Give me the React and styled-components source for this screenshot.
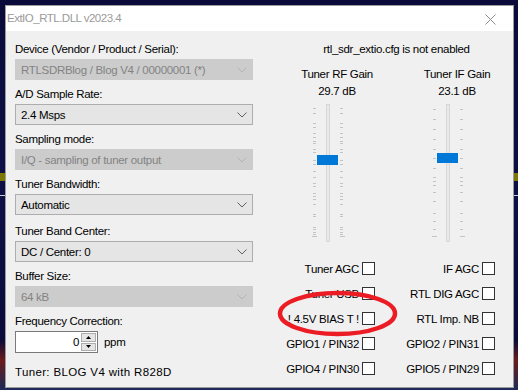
import React from "react";
import styled, { createGlobalStyle } from "styled-components";

const GlobalStyle = createGlobalStyle`
  html, body {
    margin: 0;
    padding: 0;
  }
  body {
    width: 518px;
    height: 390px;
    overflow: hidden;
    background: #0b0c3c;
    font-family: "Liberation Sans", Arial, sans-serif;
    font-size: 11.5px;
    letter-spacing: -0.3px;
    color: #000;
  }
`;

// the spectrum display behind the dialog
const Desktop = styled.div`
  position: relative;
  width: 518px;
  height: 390px;
  box-sizing: border-box;
  padding: 5px 4px 2px 5px;
  background:
    linear-gradient(to bottom, transparent 173px, #7d7600 173px, #7d7600 181px, transparent 181px, transparent 195px, #cfcfcf 195px, #cfcfcf 196px, transparent 196px),
    linear-gradient(to bottom, #0a0b3a 0, #0d0f48 200px, #0a0b3a 340px, #6b1a1a 360px, #1d2a5a 390px);
`;

const Dialog = styled.div`
  width: 509px;
  height: 383px;
  box-sizing: border-box;
  border: 1px solid #9c9c9c;
  background: #f0f0f0;
  display: flex;
  flex-direction: column;
`;

const TitleBar = styled.div`
  height: 25px;
  flex: none;
  background: #fff;
  display: flex;
  align-items: center;
  justify-content: space-between;
  padding-left: 1px;
`;

const Title = styled.span`
  color: #9a9a9a;
  font-size: 11.5px;
  letter-spacing: -0.5px;
  padding-bottom: 2px;
`;

const CloseButton = styled.div`
  width: 46px;
  height: 25px;
  display: flex;
  align-items: center;
  justify-content: center;
  padding-top: 1px;
  box-sizing: border-box;
`;

const Body = styled.div`
  flex: 1;
  display: flex;
  padding: 11px 0 0 9px;
  gap: 27px;
`;

const LeftColumn = styled.div`
  width: 238px;
  display: flex;
  flex-direction: column;
`;

const Field = styled.div`
  display: flex;
  flex-direction: column;
  margin-bottom: ${(p) => p.gap ?? 7}px;
`;

const Label = styled.div`
  height: 15px;
  line-height: 15px;
  margin-bottom: 2px;
  white-space: nowrap;
`;

const Combo = styled.div`
  height: 21px;
  box-sizing: border-box;
  display: flex;
  align-items: center;
  justify-content: space-between;
  padding: 0 5px 0 5px;
  background: ${(p) => (p.disabled ? "#cccccc" : "#e5e5e5")};
  border: 1px solid ${(p) => (p.disabled ? "#cccccc" : "#adadad")};
  color: ${(p) => (p.disabled ? "#838383" : "#000")};
  white-space: nowrap;
`;

const SpinRow = styled.div`
  display: flex;
  align-items: center;
`;

const Edit = styled.div`
  width: 66px;
  height: 22px;
  box-sizing: border-box;
  border: 1px solid #7a7a7a;
  border-right: none;
  background: #fff;
  display: flex;
  align-items: center;
  justify-content: flex-end;
  padding-right: 2px;
`;

const SpinButtons = styled.div`
  width: 17px;
  height: 22px;
  box-sizing: border-box;
  border: 1px solid #7a7a7a;
  border-left: none;
  background: #fff;
  display: flex;
  flex-direction: column;
  padding: 1px 1px 1px 0;
  gap: 1px;
`;

const SpinButton = styled.div`
  flex: 1;
  border: 1px solid #adadad;
  background: #e5e5e5;
  display: flex;
  align-items: center;
  justify-content: center;
`;

const Unit = styled.span`
  margin-left: 6px;
`;

const TunerInfo = styled.div`
  margin-top: 12px;
  line-height: 15px;
  letter-spacing: 0.35px;
`;

const RightPanel = styled.div`
  width: 233px;
  display: flex;
  flex-direction: column;
  align-items: stretch;
`;

const CfgNote = styled.div`
  height: 15px;
  line-height: 15px;
  text-align: center;
`;

const GainRow = styled.div`
  display: grid;
  grid-template-columns: 114px 114px;
  column-gap: 6px;
  margin-top: 9px;
`;

const GainColumn = styled.div`
  display: flex;
  flex-direction: column;
  align-items: center;
`;

const GainText = styled.div`
  line-height: 16.5px;
  text-align: center;
  white-space: nowrap;
`;

const SliderBox = styled.div`
  position: relative;
  width: 40px;
  height: 140px;
  margin-top: 5px;
  margin-right: 18px;
`;

const Channel = styled.div`
  position: absolute;
  left: 18px;
  top: 0;
  width: 4px;
  height: 138px;
  box-sizing: border-box;
  border: 1px solid #d6d6d6;
  background: #e7eaea;
`;

const Tick = styled.div`
  position: absolute;
  height: 1px;
  background: #c4c4c4;
  width: ${(p) => (p.long ? 5 : 3)}px;
  left: ${(p) => (p.side === "left" ? (p.long ? 4 : 5) : 32)}px;
`;

const Thumb = styled.div`
  position: absolute;
  left: 9px;
  width: 21px;
  height: 10px;
  background: #0078d7;
`;

const CheckGrid = styled.div`
  display: grid;
  grid-template-columns: 95px 95px;
  column-gap: 25px;
  row-gap: 12px;
  margin-top: 18px;
`;

const CheckItem = styled.div`
  height: 13px;
  display: flex;
  align-items: center;
  justify-content: flex-end;
  gap: 3px;
  white-space: nowrap;
`;

const Box = styled.div`
  width: 13px;
  height: 13px;
  box-sizing: border-box;
  border: 1px solid #333;
  background: #fff;
  flex: none;
`;

const Annotation = styled.svg`
  position: absolute;
  left: 276px;
  top: 289px;
  overflow: visible;
`;

const Chevron = ({ disabled }) => (
  <svg width="10" height="6" viewBox="0 0 10 6">
    <path d="M0.5 0.5 L5 5 L9.5 0.5" fill="none" stroke={disabled ? "#b3b3b3" : "#606060"} strokeWidth="1" />
  </svg>
);

const Triangle = ({ up }) => (
  <svg width="5" height="3" viewBox="0 0 5 3">
    <path d={up ? "M0 3 L2.5 0 L5 3 Z" : "M0 0 L2.5 3 L5 0 Z"} fill="#000" />
  </svg>
);

const ComboBox = ({ value, disabled }) => (
  <Combo disabled={disabled}>
    <span>{value}</span>
    <Chevron disabled={disabled} />
  </Combo>
);

const rfTicks = [4, 9, 19, 23, 29, 33, 37, 39, 45, 48, 56, 60, 67, 73, 79, 82, 89, 92, 95, 100, 110, 112, 123, 125, 128, 130];
const ifTicks = [5, 15, 25, 35, 45, 54, 64, 73, 77, 81, 88, 97, 109, 117, 125];
const LAST_TICK = 132;

const Slider = ({ ticks, thumbTop }) => (
  <SliderBox>
    <Channel />
    {ticks.map((y) => (
      <React.Fragment key={y}>
        <Tick side="left" style={{ top: y }} />
        <Tick side="right" style={{ top: y }} />
      </React.Fragment>
    ))}
    <Tick side="left" long style={{ top: LAST_TICK }} />
    <Tick side="right" long style={{ top: LAST_TICK }} />
    <Thumb style={{ top: thumbTop }} />
  </SliderBox>
);

const checks = [
  ["Tuner AGC", "IF AGC"],
  ["Tuner USB", "RTL DIG AGC"],
  ["! 4.5V BIAS T !", "RTL Imp. NB"],
  ["GPIO1 / PIN32", "GPIO2 / PIN31"],
  ["GPIO4 / PIN30", "GPIO5 / PIN29"],
];

export default function App() {
  return (
    <>
      <GlobalStyle />
      <Desktop>
        <Dialog>
          <TitleBar>
            <Title>ExtIO_RTL.DLL v2023.4</Title>
            <CloseButton>
              <svg width="11" height="11" viewBox="0 0 11 11">
                <path d="M0.5 0.5 L10.5 10.5 M10.5 0.5 L0.5 10.5" stroke="#8a8a8a" strokeWidth="1" />
              </svg>
            </CloseButton>
          </TitleBar>
          <Body>
            <LeftColumn>
              <Field>
                <Label>Device (Vendor / Product / Serial):</Label>
                <ComboBox disabled value="RTLSDRBlog / Blog V4 / 00000001 (*)" />
              </Field>
              <Field>
                <Label>A/D Sample Rate:</Label>
                <ComboBox value="2.4 Msps" />
              </Field>
              <Field>
                <Label>Sampling mode:</Label>
                <ComboBox disabled value="I/Q - sampling of tuner output" />
              </Field>
              <Field gap={9}>
                <Label>Tuner Bandwidth:</Label>
                <ComboBox value="Automatic" />
              </Field>
              <Field>
                <Label>Tuner Band Center:</Label>
                <ComboBox value="DC / Center: 0" />
              </Field>
              <Field>
                <Label>Buffer Size:</Label>
                <ComboBox disabled value="64 kB" />
              </Field>
              <Field gap={0}>
                <Label>Frequency Correction:</Label>
                <SpinRow>
                  <Edit>0</Edit>
                  <SpinButtons>
                    <SpinButton>
                      <Triangle up />
                    </SpinButton>
                    <SpinButton>
                      <Triangle />
                    </SpinButton>
                  </SpinButtons>
                  <Unit>ppm</Unit>
                </SpinRow>
              </Field>
              <TunerInfo>Tuner: BLOG V4 with R828D</TunerInfo>
            </LeftColumn>
            <RightPanel>
              <CfgNote>rtl_sdr_extio.cfg is not enabled</CfgNote>
              <GainRow>
                <GainColumn>
                  <GainText>Tuner RF Gain</GainText>
                  <GainText>29.7 dB</GainText>
                  <Slider ticks={rfTicks} thumbTop={51} />
                </GainColumn>
                <GainColumn>
                  <GainText>Tuner IF Gain</GainText>
                  <GainText>23.1 dB</GainText>
                  <Slider ticks={ifTicks} thumbTop={49} />
                </GainColumn>
              </GainRow>
              <CheckGrid>
                {checks.flat().map((label) => (
                  <CheckItem key={label}>
                    <span>{label}</span>
                    <Box />
                  </CheckItem>
                ))}
              </CheckGrid>
            </RightPanel>
          </Body>
        </Dialog>
        <Annotation width="124" height="50" viewBox="0 0 124 50">
          <ellipse cx="61.5" cy="24.5" rx="57.5" ry="20.5" fill="none" stroke="#ec1c24" strokeWidth="4.5" />
        </Annotation>
      </Desktop>
    </>
  );
}
